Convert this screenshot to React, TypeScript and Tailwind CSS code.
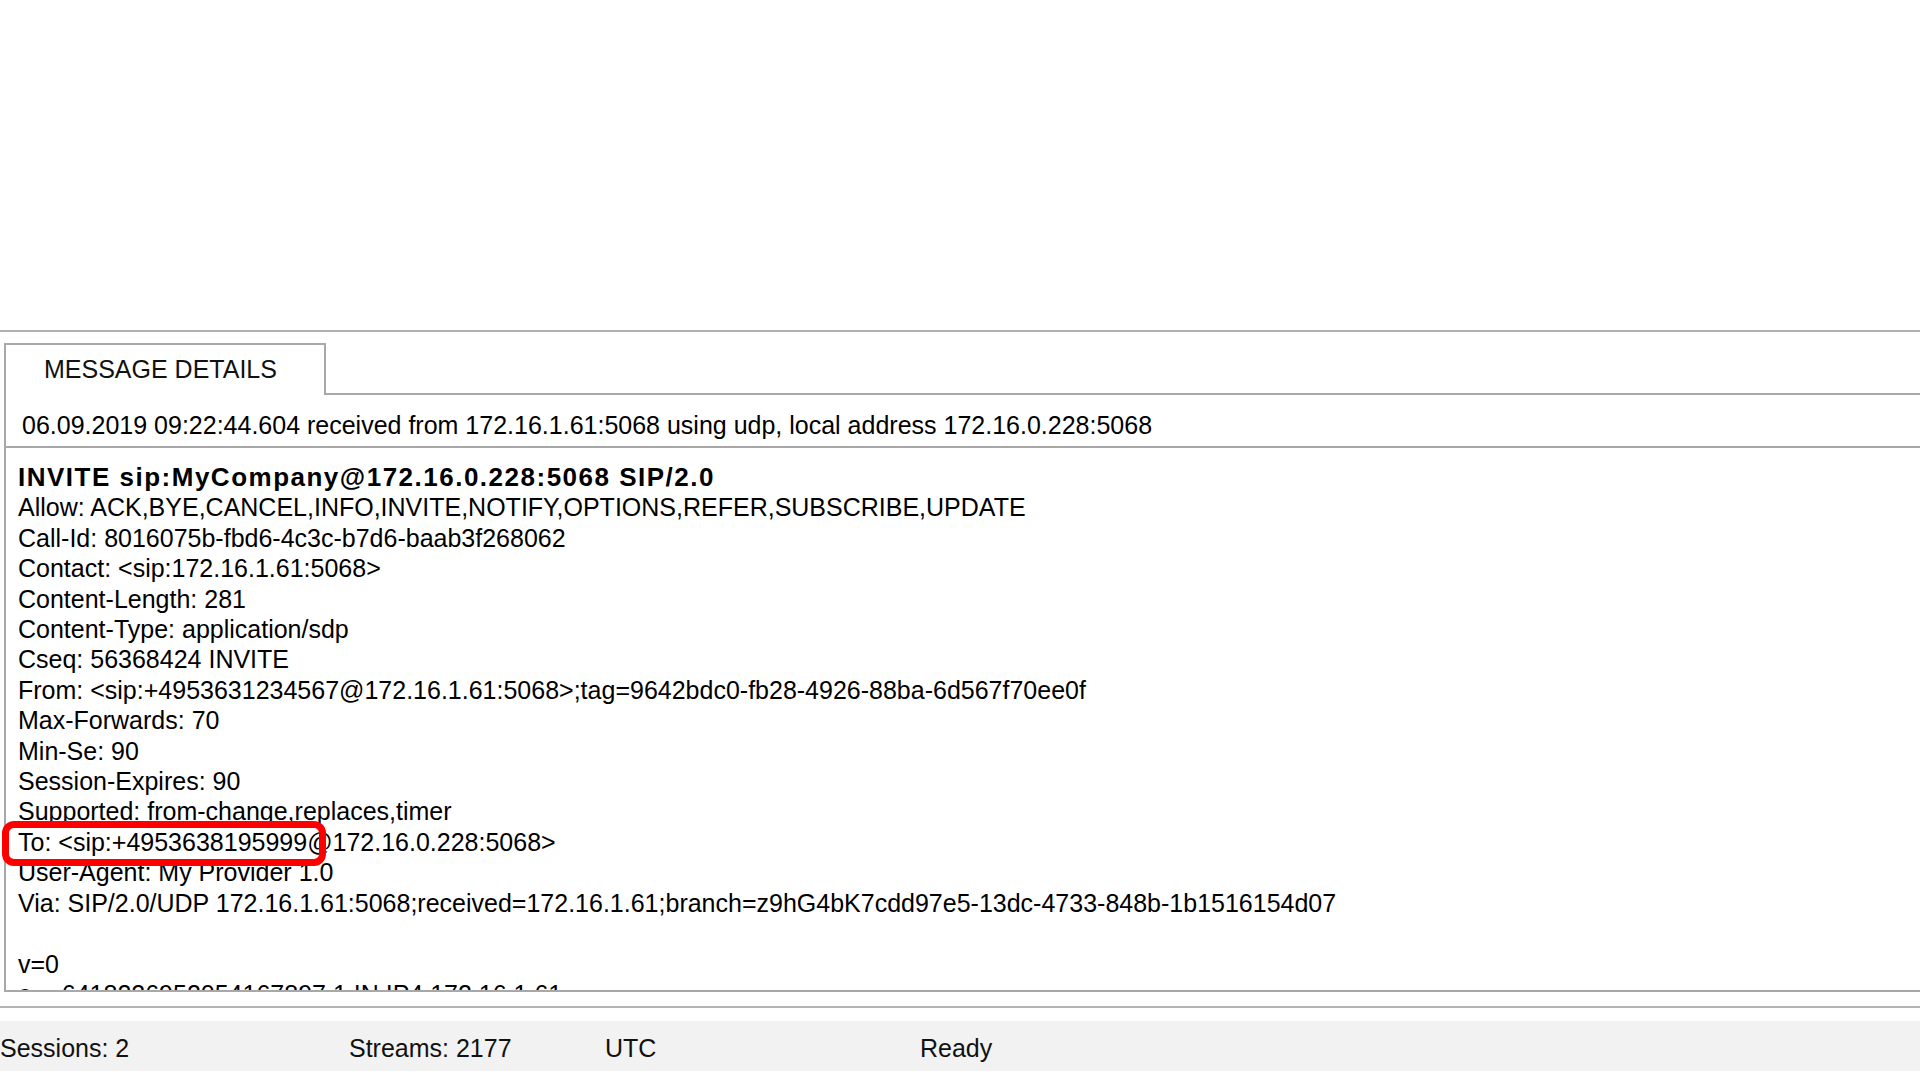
import React from "react";

const lines: { text: string; bold?: boolean }[] = [
  { text: "INVITE sip:MyCompany@172.16.0.228:5068 SIP/2.0", bold: true },
  { text: "Allow: ACK,BYE,CANCEL,INFO,INVITE,NOTIFY,OPTIONS,REFER,SUBSCRIBE,UPDATE" },
  { text: "Call-Id: 8016075b-fbd6-4c3c-b7d6-baab3f268062" },
  { text: "Contact: <sip:172.16.1.61:5068>" },
  { text: "Content-Length: 281" },
  { text: "Content-Type: application/sdp" },
  { text: "Cseq: 56368424 INVITE" },
  { text: "From: <sip:+4953631234567@172.16.1.61:5068>;tag=9642bdc0-fb28-4926-88ba-6d567f70ee0f" },
  { text: "Max-Forwards: 70" },
  { text: "Min-Se: 90" },
  { text: "Session-Expires: 90" },
  { text: "Supported: from-change,replaces,timer" },
  { text: "To: <sip:+4953638195999@172.16.0.228:5068>" },
  { text: "User-Agent: My Provider 1.0" },
  { text: "Via: SIP/2.0/UDP 172.16.1.61:5068;received=172.16.1.61;branch=z9hG4bK7cdd97e5-13dc-4733-848b-1b1516154d07" },
  { text: "\u00a0" },
  { text: "v=0" },
  { text: "o=- 6418226952054167897 1 IN IP4 172.16.1.61" },
  { text: "s=-" },
];

export default function App() {
  return (
    <div
      className="relative w-[1920px] h-[1080px] bg-white flex flex-col overflow-hidden text-black"
      style={{ fontFamily: '"Liberation Sans", Arial, sans-serif' }}
    >
      <div className="h-[330px] shrink-0" />
      <div className="h-[2px] shrink-0 bg-[#b0b0b0]" />
      <div className="h-[11px] shrink-0" />

      {/* Tab strip */}
      <div className="flex h-[52px] shrink-0 pl-[4px]">
        <div className="w-[322px] border-2 border-b-0 border-[#a8a8a8] flex items-center pl-[38px] text-[25px] text-[#111]">
          MESSAGE DETAILS
        </div>
        <div className="flex-1 border-b-2 border-[#a8a8a8]" />
      </div>

      {/* Panel */}
      <div className="flex flex-col ml-[4px] border-l-2 border-[#a8a8a8] shrink-0">
        <div className="h-[53px] flex items-center pl-[16px] pt-[10px] border-b-2 border-[#a8a8a8] text-[25px]">
          06.09.2019 09:22:44.604 received from 172.16.1.61:5068 using udp, local address 172.16.0.228:5068
        </div>
        <div className="h-[544px] border-b-2 border-[#a8a8a8] overflow-hidden pl-[12px] pt-[14px]">
          {lines.map((l, i) => (
            <div
              key={i}
              className={`leading-[30.4px] whitespace-pre ${l.bold ? "font-bold text-[26px] tracking-[1.5px]" : "text-[25px]"}`}
            >
              {l.text}
            </div>
          ))}
        </div>
      </div>

      <div className="h-[14px] shrink-0" />
      <div className="h-[2px] shrink-0 bg-[#b4b4b4]" />
      <div className="h-[13px] shrink-0" />

      {/* Status bar */}
      <div className="h-[50px] shrink-0 bg-[#f2f2f2] flex items-center pt-[6px] text-[25px] text-[#111]">
        <div className="w-[349px]">Sessions: 2</div>
        <div className="w-[256px]">Streams: 2177</div>
        <div className="w-[315px]">UTC</div>
        <div>Ready</div>
      </div>

      {/* Red annotation box */}
      <div className="absolute left-[2px] top-[821px] w-[324px] h-[45px] border-[7px] border-[#ff0000] rounded-[12px]" />
    </div>
  );
}
